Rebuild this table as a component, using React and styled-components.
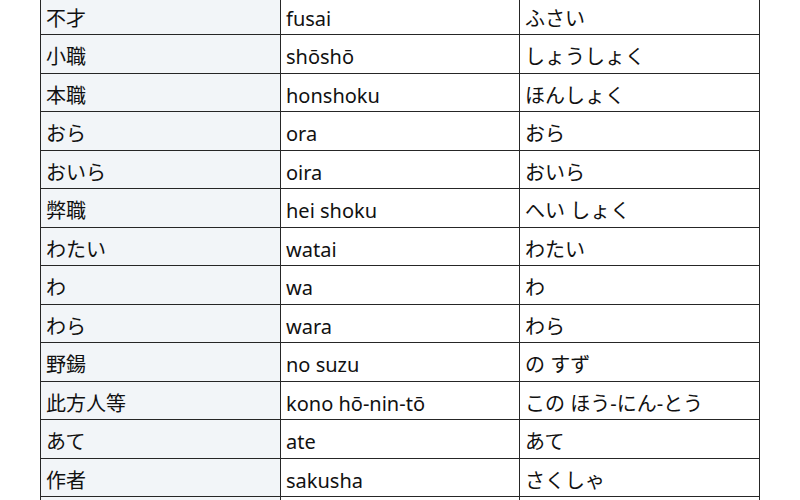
import React from 'react';
import styled, { createGlobalStyle } from 'styled-components';

const GlobalStyle = createGlobalStyle`
  html, body {
    margin: 0;
    padding: 0;
    background: #ffffff;
  }
  body {
    width: 800px;
    height: 500px;
    overflow: hidden;
  }
`

const Page = styled.div`
  width: 800px;
  height: 500px;
  overflow: hidden;
  padding-left: 40px;
  box-sizing: border-box;
`

const Table = styled.table`
  border-collapse: collapse;
  margin-top: -4.5px;
  width: 719px;
  table-layout: fixed;
  font-family: "Noto Sans", "Noto Sans CJK JP", sans-serif;
  font-size: 20px;
  color: #111;
`

const Row = styled.tr`
  height: 38.5px;
`

const Cell = styled.td`
  border: 1px solid #262626;
  padding: 7px 5px 0;
  white-space: nowrap;
  vertical-align: middle;
  line-height: 1;
  background: ${props => (props.head ? '#f2f5f8' : '#ffffff')};
`

const rows = [
  ['不才', 'fusai', 'ふさい'],
  ['小職', 'shōshō', 'しょうしょく'],
  ['本職', 'honshoku', 'ほんしょく'],
  ['おら', 'ora', 'おら'],
  ['おいら', 'oira', 'おいら'],
  ['弊職', 'hei shoku', 'へい しょく'],
  ['わたい', 'watai', 'わたい'],
  ['わ', 'wa', 'わ'],
  ['わら', 'wara', 'わら'],
  ['野鍚', 'no suzu', 'の すず'],
  ['此方人等', 'kono hō-nin-tō', 'この ほう-にん-とう'],
  ['あて', 'ate', 'あて'],
  ['作者', 'sakusha', 'さくしゃ'],
  ['', '', ''],
]

const App = () => (
  <React.Fragment>
    <GlobalStyle />
    <Page>
      <Table>
        <colgroup>
          <col style={{ width: 240 }} />
          <col style={{ width: 239 }} />
          <col style={{ width: 240 }} />
        </colgroup>
        <tbody>
          {rows.map((row, index) => (
            <Row key={index}>
              <Cell head>{row[0]}</Cell>
              <Cell>{row[1]}</Cell>
              <Cell>{row[2]}</Cell>
            </Row>
          ))}
        </tbody>
      </Table>
    </Page>
  </React.Fragment>
)

export default App;
